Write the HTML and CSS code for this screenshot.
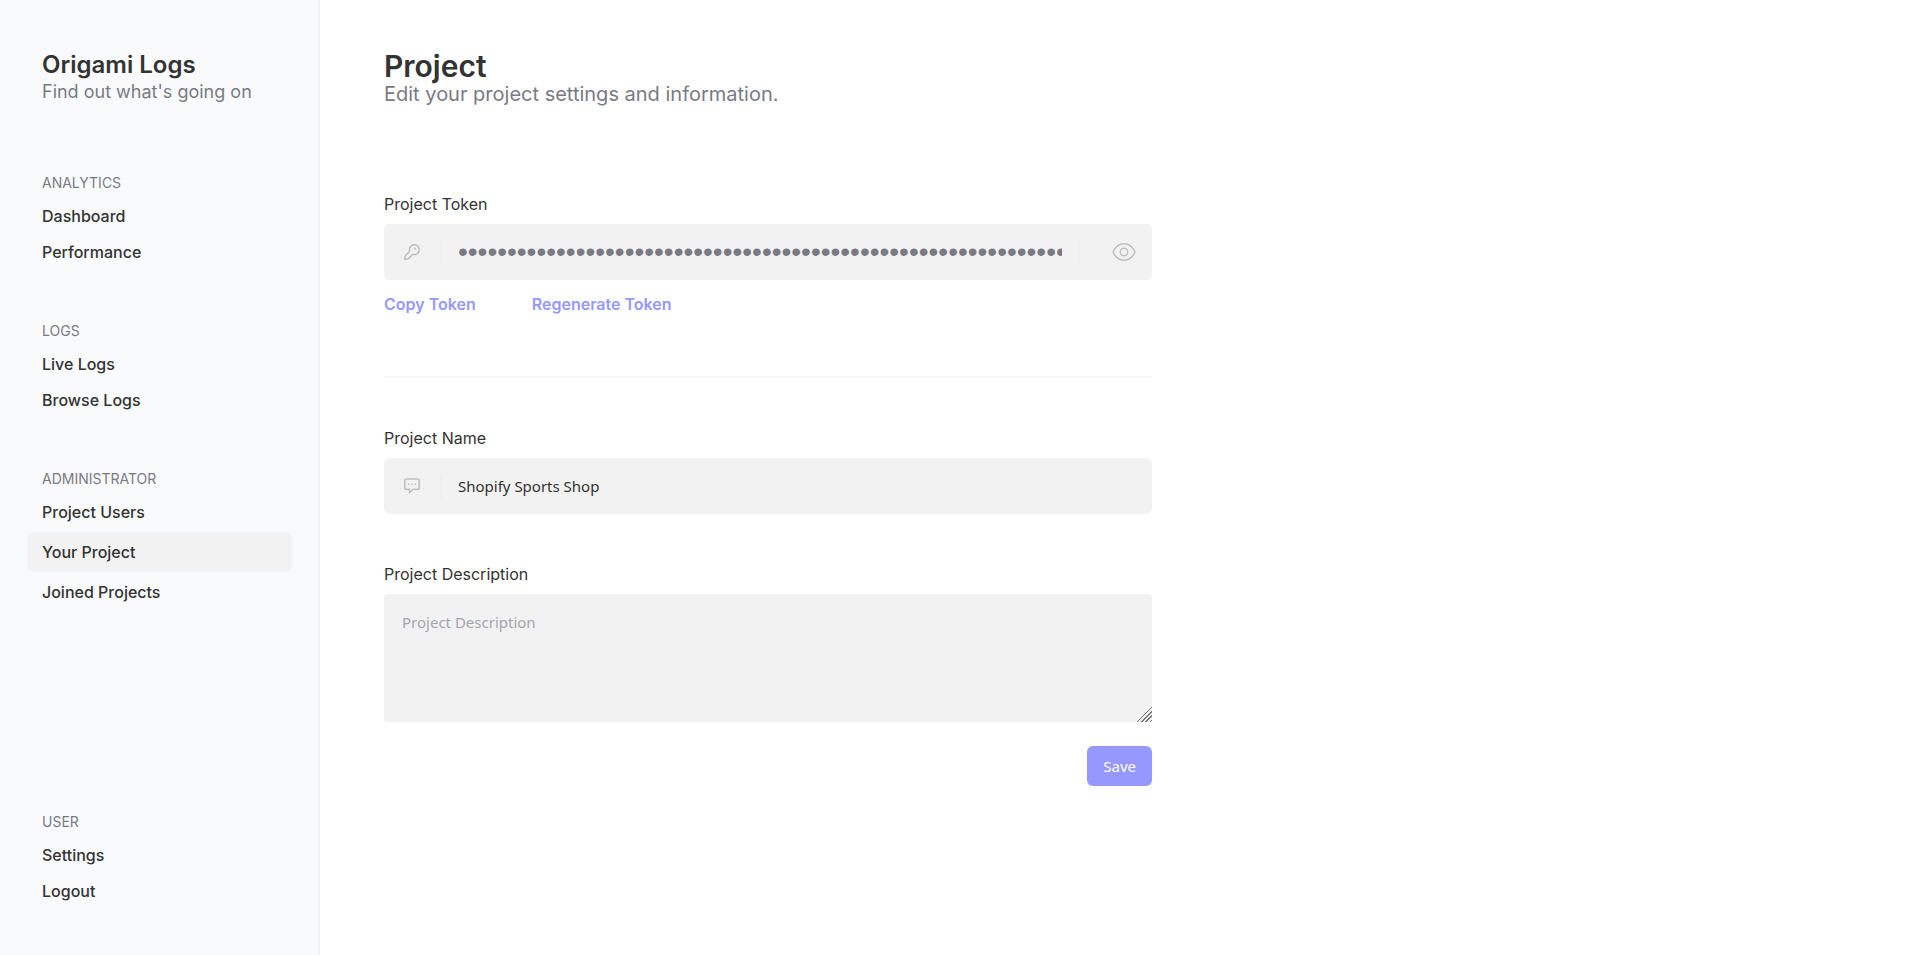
FILE: index.html
```html
<!DOCTYPE html>
<html lang="en">
  <head>
    <meta charset="UTF-8" />
    <meta name="viewport" content="width=device-width, initial-scale=1.0" />
    <title>Origami Logs - Project</title>
    <link rel="stylesheet" href="styles.css">
  </head>

  <body>
    <aside class="sidebar">
      <header class="brand">
        <h2>Origami Logs</h2>
        <p>Find out what's going on</p>
      </header>

      <nav class="menu">
        <section>
          <h3>ANALYTICS</h3>
          <a href="#dashboard">Dashboard</a>
          <a href="#performance">Performance</a>
        </section>
        <section>
          <h3>LOGS</h3>
          <a href="#live">Live Logs</a>
          <a href="#browse">Browse Logs</a>
        </section>
        <section>
          <h3>ADMINISTRATOR</h3>
          <a href="#users">Project Users</a>
          <a href="#project" class="active">Your Project</a>
          <a href="#joined">Joined Projects</a>
        </section>
        <section class="user">
          <h3>USER</h3>
          <a href="#settings">Settings</a>
          <a href="#logout">Logout</a>
        </section>
      </nav>
    </aside>

    <main class="content">
      <header class="page-title">
        <h1>Project</h1>
        <p>Edit your project settings and information.</p>
      </header>

      <form class="settings">
        <div class="field">
          <label for="token">Project Token</label>
          <div class="input-box">
            <svg class="icon" viewBox="0 0 16 16">
              <path d="M5.700 7.200A4.900 4.900 0 1 1 8.800 10.300L4.300 14.600Q3.600 15.200 2.600 15.200H.8V13.400Q.8 12.400 1.400 11.700Z" />
              <path d="M10.200 4.300Q11.500 4.300 11.700 5.800" />
            </svg>
            <input type="password" id="token" class="token" readonly
              value="0123456789abcdef0123456789abcdef0123456789abcdef0123456789abcdef0123456789abcdef" />
            <button type="button" class="reveal" aria-label="Show token">
              <svg viewBox="0 0 24 24">
                <path d="M1 12C3.500 6.500 7.300 3.800 12 3.800S20.500 6.500 23 12C20.500 17.500 16.700 20.200 12 20.200S3.500 17.500 1 12Z" />
                <circle cx="12" cy="12" r="3.700" />
              </svg>
            </button>
          </div>
          <div class="actions">
            <button type="button">Copy Token</button>
            <button type="button">Regenerate Token</button>
          </div>
        </div>

        <hr />

        <div class="field">
          <label for="name">Project Name</label>
          <div class="input-box">
            <svg class="icon" viewBox="0 0 16 16">
              <path d="M2 1H14Q15.200 1 15.200 2.200V10Q15.200 11.200 14 11.200H9L5.500 14.800V11.200H2Q.8 11.200 .8 10V2.200Q.8 1 2 1Z" />
              <path d="M4.200 6.200H5.400M7.400 6.200H8.600M10.600 6.200H11.800" />
            </svg>
            <input type="text" id="name" value="Shopify Sports Shop" />
          </div>
        </div>

        <div class="field">
          <label for="description">Project Description</label>
          <textarea id="description" placeholder="Project Description"></textarea>
        </div>

        <button type="submit" class="save">Save</button>
      </form>
    </main>
  </body>
</html>
```
FILE: styles.css
```css
* {
  box-sizing: border-box;
}

body {
  margin: 0;
  min-height: 100vh;
  display: flex;
  font-family: Inter, sans-serif;
  font-size: 16px;
  line-height: 24px;
  color: #333;
  background-color: #fff;
}

h1, h2, h3, p {
  margin: 0;
}

.sidebar {
  width: 320px;
  flex-shrink: 0;
  display: flex;
  flex-direction: column;
  padding: 48px 26px 48px 27px;
  background-color: #f9fafc;
  border-right: 2px solid #f2f2f4;
}

.brand {
  padding: 0 15px;
  margin-bottom: 70px;
}

.brand h2 {
  font-size: 24px;
  font-weight: 600;
  line-height: 34px;
}

.brand p {
  font-size: 18px;
  line-height: 20px;
  color: #7a7a85;
}

.menu {
  flex: 1;
  display: flex;
  flex-direction: column;
  gap: 52px;
}

.menu section {
  display: flex;
  flex-direction: column;
  gap: 4px;
}

.menu h3 {
  padding: 0 15px;
  margin-bottom: 2px;
  font-size: 14px;
  font-weight: 400;
  line-height: 22px;
  color: #7a7a85;
}

.menu a {
  padding: 4px 15px;
  border-radius: 6px;
  font-weight: 500;
  color: #333;
  text-decoration: none;
}

.menu a.active {
  padding: 8px 15px;
  background-color: #f2f2f2;
}

.menu .user {
  margin-top: auto;
}

.content {
  flex: 1;
  padding: 48px 64px;
}

.page-title {
  margin-bottom: 88px;
}

.page-title h1 {
  font-size: 30px;
  font-weight: 600;
  line-height: 36px;
}

.page-title p {
  font-size: 20px;
  line-height: 20px;
  color: #7a7a85;
}

.settings {
  max-width: 768px;
  display: flex;
  flex-direction: column;
}

.field {
  display: flex;
  flex-direction: column;
  gap: 8px;
  margin-bottom: 48px;
}

.input-box {
  display: flex;
  align-items: center;
  height: 56px;
  padding-left: 20px;
  border-radius: 6px;
  background-color: #f2f2f2;
}

svg {
  fill: none;
  stroke: #bfbfbf;
  stroke-width: 1.5;
  stroke-linejoin: round;
}

.icon {
  width: 16px;
  height: 16px;
  margin-right: 20px;
}

input, textarea, .save {
  font-family: "Noto Sans", sans-serif;
  font-size: 15px;
  line-height: 24px;
  color: #333;
}

input {
  flex: 1;
  min-width: 0;
  height: 24px;
  padding: 0 16px;
  border: 0;
  border-left: 2px solid #eee;
  background: none;
  outline: none;
}

.token {
  font-family: "Liberation Sans", sans-serif;
  font-size: 28px;
  color: #7a7a85;
  border-right: 2px solid #eee;
}

.reveal {
  display: flex;
  padding: 0 16px 0 32px;
  border: 0;
  background: none;
  cursor: pointer;
}

.reveal svg {
  width: 24px;
  height: 24px;
}

.actions {
  display: flex;
  gap: 56px;
  padding: 4px 0;
}

.actions button {
  padding: 0;
  border: 0;
  background: none;
  font: inherit;
  font-weight: 600;
  color: #9698ff;
  cursor: pointer;
}

hr {
  width: 100%;
  margin: 8px 0 48px;
  border: 0;
  border-top: 2px solid #f8f8f8;
}

textarea {
  height: 128px;
  padding: 16px 18px;
  border: 0;
  border-radius: 4px;
  background-color: #f2f2f2;
  resize: vertical;
  outline: none;
}

textarea::placeholder {
  color: #a5a6b0;
}

/* striped grip in the lower right corner */
textarea::-webkit-resizer {
  background:
    linear-gradient(135deg, #f2f2f2 48%, transparent 48%),
    repeating-linear-gradient(315deg, #f2f2f2 0 1px, #777 1px 2px, #f2f2f2 2px 3px);
}

.field:last-of-type {
  margin-bottom: 24px;
}

.save {
  align-self: flex-end;
  padding: 8px 16px;
  border: 0;
  border-radius: 6px;
  background-color: #9698ff;
  color: #fff;
  cursor: pointer;
}
```
